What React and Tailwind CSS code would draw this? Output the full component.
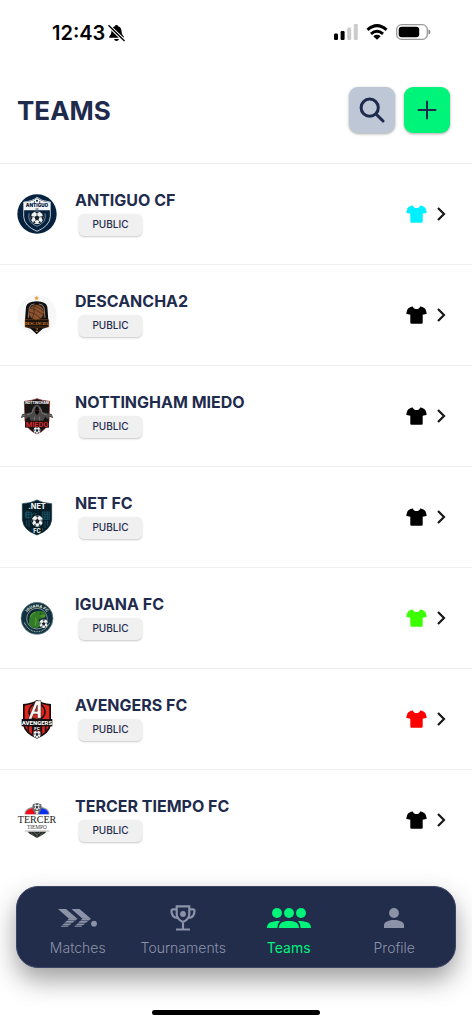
const NAVY = "#1f2b4d";

function Ball({ x, y, r }) {
  return (
    <g transform={`translate(${x} ${y}) scale(${r / 10})`}>
      <circle r="10" fill="#f1f3f2" />
      <path d="M0-4 4-1 2 4H-2L-4-1Z M-4-9 0-7 4-9 0-10Z M9-4 7 0 9 4 10 0Z M-9-4-7 0-9 4-10 0Z M4 6 7 7 4 9 2 8Z M-4 6-7 7-4 9-2 8Z" fill="#17202b" />
      <path d="M0-4V-8M4-1 8-2M2 4 5 7M-2 4-5 7M-4-1-8-2" stroke="#17202b" strokeWidth="1" />
    </g>
  );
}

function AntiguoCrest() {
  return (
    <svg viewBox="0 0 120 120" className="size-10">
      <circle cx="60" cy="60" r="59" fill="#07223f" />
      <path d="M20 24Q46 22 60 10 74 22 100 24V68Q98 96 60 112 22 96 20 68Z" fill="#07223f" stroke="#dfe6ec" strokeWidth="2.5" />
      <path d="M21 25Q46 24 60 12 74 24 99 25V49H21Z" fill="#f3f5f7" />
      <circle cx="60" cy="20" r="3" fill="#07223f" />
      <circle cx="52" cy="24" r="2" fill="#07223f" />
      <circle cx="68" cy="24" r="2" fill="#07223f" />
      <text x="60" y="40" textAnchor="middle" fontSize="14" fontWeight="900" fill="#07223f" fontFamily="Inter, sans-serif">ANTIGUO</text>
      <text x="60" y="48" textAnchor="middle" fontSize="7" fontWeight="700" fill="#07223f" fontFamily="Inter, sans-serif">CF</text>
      <path d="M36 58Q30 86 60 97 90 86 84 58" fill="none" stroke="#8a9bab" strokeWidth="2.5" />
      <Ball x={60} y={71} r={19} />
    </svg>
  );
}

function DescanchaCrest() {
  return (
    <svg viewBox="0 0 120 120" className="size-10">
      <circle cx="60" cy="60" r="59" fill="#f7f7f7" />
      <path d="M59 2 61 7 66 7 62 11 64 16 59 13 54 16 56 11 52 7 57 7Z" fill="#e99a2a" />
      <path d="M27 35Q31 20 59 19 87 20 91 35L94 75V96L77 101 59 118 41 101 24 96V75Z" fill="#111010" />
      <path d="M36 38Q38 28 59 27 80 28 82 38L85 70H33Z" fill="#2c1a10" />
      <path d="M34 68 37 38Q40 27 52 27M84 68 81 38Q78 27 66 27" fill="none" stroke="#b8b0a6" strokeWidth="2" />
      <circle cx="58" cy="52" r="22" fill="#8b5431" />
      <path d="M40 39Q57 42 78 59M36 51Q54 52 70 70M49 32Q69 38 79 49M45 69Q55 55 50 32" fill="none" stroke="#4b2917" strokeWidth="2.5" />
      <path d="M24 74H95V96H24Z" fill="#17110d" stroke="#9c5a1c" strokeWidth="1.5" />
      <text x="59" y="89" textAnchor="middle" fontSize="11" fontWeight="700" fill="#e08a30" fontFamily="Liberation Serif, serif">DESCANCHA</text>
      <text x="59" y="112" textAnchor="middle" fontSize="17" fontWeight="700" fill="#d2802b" fontFamily="Liberation Serif, serif">2</text>
    </svg>
  );
}

function NottinghamCrest() {
  return (
    <svg viewBox="0 0 120 120" className="size-10">
      <path d="M22 16Q45 14 60 8 75 14 98 16L96 74Q92 100 60 114 28 100 24 74Z" fill="#151515" stroke="#8b1c1e" strokeWidth="2" />
      <path d="M60 25Q75 31 76 49L104 54 109 67 98 62 93 70 84 62 78 76H42L36 62 27 70 22 62 11 67 16 54 44 49Q45 31 60 25Z" fill="#4a4848" />
      <path d="M60 31Q68 38 65 51L60 57 55 51Q52 38 60 31Z" fill="#050505" />
      <path d="M53 34Q46 45 44 52L30 57M67 34Q74 45 76 52L90 57M52 62V76M68 62V76M14 60 24 57M106 60 96 57" stroke="#8d8a8a" strokeWidth="2" fill="none" />
      <circle cx="57" cy="43" r="1.5" fill="#d61f1f" />
      <circle cx="63" cy="43" r="1.5" fill="#d61f1f" />
      <text x="60" y="24" textAnchor="middle" fontSize="10" fontWeight="800" fill="#efefef" fontFamily="Inter, sans-serif">NOTTINGHAM</text>
      <path d="M24 74H96V95H24Z" fill="#241011" />
      <text x="60" y="93" textAnchor="middle" fontSize="22" fontWeight="700" fill="#d72c2c" fontFamily="Roboto, sans-serif">MIEDO</text>
      <Ball x={60} y={103} r={10} />
    </svg>
  );
}

function NetCrest() {
  return (
    <svg viewBox="0 0 120 120" className="size-10">
      <path d="M16 20Q42 19 60 9 78 19 104 20V68Q101 100 60 114 19 100 16 68Z" fill="#071d28" stroke="#123846" strokeWidth="2" />
      <path d="M25 46H44V61H25ZM29 42V65M35 42V65M25 53H49M49 50H59M77 45H97V67H77ZM77 52H97M77 60H97M84 45V67M91 45V67M29 70V87M36 67V91M84 73V93M92 71V86M45 95V101M77 93V101" fill="none" stroke="#1f6478" strokeWidth="2" />
      <text x="60" y="36" textAnchor="middle" fontSize="22" fontWeight="800" fill="#e7f0ef" fontFamily="Inter, sans-serif">.NET</text>
      <Ball x={61} y={72} r={17} />
      <text x="60" y="108" textAnchor="middle" fontSize="17" fontWeight="800" fill="#e7f0ef" fontFamily="Inter, sans-serif">FC</text>
    </svg>
  );
}

function IguanaCrest() {
  return (
    <svg viewBox="0 0 120 120" className="size-10">
      <circle cx="60" cy="61" r="48" fill="#102f40" stroke="#6d8c8d" strokeWidth="2" />
      <circle cx="60" cy="62" r="31" fill="#0c2939" stroke="#bdc7b4" strokeWidth="2" />
      <path id="iguana-arc" d="M24 64A36 36 0 0 1 96 64" fill="none" />
      <text fontSize="12" fontWeight="800" fill="#dce1ce" fontFamily="Inter, sans-serif" textAnchor="middle">
        <textPath href="#iguana-arc" startOffset="50%">IGUANA FC</textPath>
      </text>
      <path d="M22 74Q36 101 60 101T98 74" fill="none" stroke="#8ba29b" strokeWidth="4" strokeDasharray="3 2" />
      <path d="M36 76Q34 42 62 39 82 38 88 52L82 61Q68 60 64 66L74 80 62 90Q46 90 36 80Z" fill="#327c28" />
      <path d="M40 56 46 47 56 42M56 60Q60 70 54 82M70 54H84" fill="none" stroke="#78ad3f" strokeWidth="2.5" />
      <circle cx="70" cy="48" r="2" fill="#10251b" />
      <Ball x={80} y={77} r={13} />
    </svg>
  );
}

function AvengersCrest() {
  return (
    <svg viewBox="0 0 120 120" className="size-10">
      <path d="M18 15Q46 12 60 3 74 12 102 15V78Q98 104 60 119 22 104 18 78Z" fill="#160c0e" />
      <path d="M23 20Q45 17 60 9 75 17 97 20V77Q92 100 60 113 28 100 23 77Z" fill="#e1251b" />
      <path d="M34 80V101M47 80V106M73 80V106M86 80V101" stroke="#171012" strokeWidth="5" />
      <circle cx="60" cy="38" r="24" fill="none" stroke="#171012" strokeWidth="5" />
      <path d="M34 60 56 5H72V58H61V45H50L44 60ZM53 37H61V18Z" fill="#f7f6f5" stroke="#171012" strokeWidth="1.5" fillRule="evenodd" />
      <path d="M14 60H106V82H14Z" fill="#130e10" />
      <text x="60" y="78" textAnchor="middle" fontSize="18" fontWeight="800" fill="#fff" fontFamily="Roboto, sans-serif">AVENGERS</text>
      <path d="M49 81H71V95H49Z" fill="#130e10" />
      <text x="60" y="93" textAnchor="middle" fontSize="12" fontWeight="800" fill="#fff" fontFamily="Inter, sans-serif">FC</text>
      <Ball x={60} y={106} r={11} />
    </svg>
  );
}

function TercerCrest() {
  return (
    <svg viewBox="0 0 120 120" className="size-10">
      <path d="M22 43Q23 27 42 22L60 10 78 22Q97 27 98 43Z" fill="#9b9d9c" />
      <path d="M25 43Q26 25 54 23V43Z" fill="#f00b18" />
      <path d="M66 23Q94 25 95 43H66Z" fill="#0930ef" />
      <path d="M47 13 60 9 73 13V28L66 43H54L47 28Z" fill="#6b6e6e" />
      <Ball x={60} y={21} r={9} />
      <path d="M55 33H65L62 43H58Z" fill="#e4e4e4" />
      <text x="60" y="70" textAnchor="middle" fontSize="30" fontWeight="500" fill="#161616" fontFamily="Liberation Serif, serif">TERCER</text>
      <text x="60" y="88" textAnchor="middle" fontSize="16" fill="#333" fontFamily="Liberation Serif, serif">TIEMPO</text>
      <path d="M23 93H97" stroke="#777" strokeWidth="1.5" />
      <path d="M32 95H88L82 101 60 114 38 101Z" fill="#252b27" />
      <path d="M50 96 60 104 70 96M60 104V113M42 98 52 107M78 98 68 107" fill="none" stroke="#9da19e" strokeWidth="1.5" />
    </svg>
  );
}

const teams = [
  { name: "ANTIGUO CF", crest: AntiguoCrest, color: "#00f0ff" },
  { name: "DESCANCHA2", crest: DescanchaCrest, color: "#000000" },
  { name: "NOTTINGHAM MIEDO", crest: NottinghamCrest, color: "#000000" },
  { name: "NET FC", crest: NetCrest, color: "#000000" },
  { name: "IGUANA FC", crest: IguanaCrest, color: "#3cff00" },
  { name: "AVENGERS FC", crest: AvengersCrest, color: "#ff0000" },
  { name: "TERCER TIEMPO FC", crest: TercerCrest, color: "#000000" },
];

function StatusBar() {
  return (
    <div className="flex h-16 items-center justify-between pl-[52px] pr-[41px]">
      <div className="flex items-center gap-[3px] pt-px text-black">
        <span className="text-[20px] font-semibold leading-6">12:43</span>
        <svg viewBox="0 0 17 18" className="h-[18px] w-[17px]">
          <path d="M8.500 1C7.500 1 7 1.600 6.900 2.300 4.300 3 3.500 5 3.400 7.500 3.300 10 2.700 11 1.400 12.200 1 12.600 1 13.800 1.900 13.800H15.100C16 13.800 16 12.600 15.600 12.200 14.300 11 13.700 10 13.600 7.500 13.500 5 12.700 3 10.100 2.300 10 1.600 9.500 1 8.500 1ZM6 15H11Q10.500 17 8.500 17T6 15Z" />
          <path d="M0 1 16.500 17" stroke="#fff" strokeWidth="3.4" />
          <path d="M.5 1.300 16.500 17" stroke="#000" strokeWidth="1.400" />
        </svg>
      </div>
      <div className="flex items-center gap-2">
        <svg viewBox="0 0 24 16" className="h-4 w-6">
          <rect x="0" y="9.500" width="4" height="6.500" rx="1.200" />
          <rect x="6.600" y="7" width="4" height="9" rx="1.200" />
          <rect x="13.200" y="3.500" width="4" height="12.500" rx="1.200" fill="#ccc" />
          <rect x="19.800" y="0" width="4" height="16" rx="1.200" fill="#ccc" />
        </svg>
        <svg viewBox="0 0 22 16" className="h-4 w-[22px]" fill="none" stroke="#000" strokeWidth="3">
          <path d="M1.500 5.800Q11-2.600 20.500 5.800M5 9.800Q11 4.800 17 9.800" />
          <path d="M11 15.800 7.300 12.200Q11 9.300 14.700 12.200Z" fill="#000" stroke="none" />
        </svg>
        <svg viewBox="0 0 35 16" className="h-4 w-[35px]">
          <rect x=".7" y=".7" width="30.600" height="14.600" rx="4.800" fill="none" stroke="#999" strokeWidth="1.300" />
          <rect x="2.700" y="2.700" width="20.500" height="10.600" rx="3" />
          <path d="M32.500 5.300Q34.500 6 34.500 8T32.500 10.700Z" fill="#888" />
        </svg>
      </div>
    </div>
  );
}

function Shirt({ color }) {
  return (
    <svg viewBox="0 0 21 18" className="h-[18px] w-[21px]" fill={color}>
      <path d="M6.800.4C7.500 2.300 8.800 3 10.500 3S13.500 2.300 14.200.4C16.500.6 18.500 1.600 19.600 3.500L20.700 7.300Q20.800 8 20.100 8.100L16.700 8.700V16.500Q16.700 17.700 15.500 17.700H5.500Q4.300 17.700 4.300 16.500V8.700L.9 8.100Q.2 8 .3 7.300L1.400 3.500C2.500 1.600 4.500.6 6.800.4Z" />
    </svg>
  );
}

function TeamRow({ team }) {
  const Crest = team.crest;
  return (
    <li className="border-t border-[#f0f0f2]">
      <a href="#team" className="flex h-[100px] items-center pl-[17px] pr-[25px]">
        <Crest />
        <div className="ml-[18px] flex flex-1 flex-col items-start gap-0.5 pb-1">
          <span className="text-[16px] font-bold leading-6 text-[#1f2b4d]">{team.name}</span>
          <span className="ml-1 flex h-[22px] w-[63px] items-center justify-center rounded-[5px] bg-[#f0f0f0] pb-px text-[10px] font-medium text-[#1f2b4d] shadow-[0_1px_2px_rgba(0,0,0,0.22)]">
            PUBLIC
          </span>
        </div>
        <Shirt color={team.color} />
        <svg viewBox="0 0 12 16" className="ml-2 h-4 w-3" fill="none" stroke="#18181b" strokeWidth="2.2">
          <path d="M3 2 9 8 3 14" />
        </svg>
      </a>
    </li>
  );
}

function MatchesIcon() {
  return (
    <svg viewBox="0 0 39 18" className="h-[18px] w-[39px]" fill="currentColor">
      <path d="M0 0H8L19.500 9.700H11ZM13.500 0H21.500L33 9.700H24.500Z" />
      <path d="M11 9.500H19.500L17.500 11.400H9ZM8.500 12H16.500L14.600 13.800H6.500ZM6 14.400H13.500L12 15.900H4.500ZM4 16.500H11L9.700 17.800H2.700ZM24.500 9.500H33L31 11.400H22.500ZM22 12H30L28.100 13.800H20ZM19.500 14.400H27L25.500 15.900H18ZM17.500 16.500H24.500L23.200 17.800H16.200Z" />
      <circle cx="36" cy="14.700" r="2.900" />
    </svg>
  );
}

function TrophyIcon() {
  return (
    <svg viewBox="0 0 26 26" className="size-[26px]" fill="none" stroke="currentColor" strokeWidth="2.200">
      <path d="M6.700 1.300H19.300V9C19.300 13 16.500 15.500 13 17 9.500 15.500 6.700 13 6.700 9ZM6 4.300H3.200Q1.500 4.300 1.500 6C1.500 10 3.500 12.800 8 13M20 4.300H22.800Q24.500 4.300 24.500 6C24.500 10 22.500 12.800 18 13M13 17V24M6 24.500H20" />
      <circle cx="13" cy="9" r="2.900" fill="currentColor" stroke="none" />
    </svg>
  );
}

function TeamsIcon() {
  return (
    <svg viewBox="0 0 44 20" className="h-5 w-11" fill="currentColor">
      <circle cx="10" cy="5" r="5" />
      <circle cx="22" cy="5" r="5" />
      <circle cx="34" cy="5" r="5" />
      <path d="M12 20C12 15.500 15 13 22 13S32 15.500 32 20ZM0 20C0 15 4 13 13 13.100Q10.500 15.500 10.300 20ZM44 20C44 15 40 13 31 13.100Q33.500 15.500 33.700 20Z" />
    </svg>
  );
}

function ProfileIcon() {
  return (
    <svg viewBox="0 0 20 20" className="size-5" fill="currentColor">
      <circle cx="10" cy="5" r="4.900" />
      <path d="M0 20V17C0 13.700 5.500 12 10 12S20 13.700 20 17V20Z" />
    </svg>
  );
}

const tabs = [
  { label: "Matches", icon: MatchesIcon },
  { label: "Tournaments", icon: TrophyIcon },
  { label: "Teams", icon: TeamsIcon, active: true },
  { label: "Profile", icon: ProfileIcon },
];

function App() {
  return (
    <div className="flex min-h-screen flex-col bg-white font-['Inter',sans-serif]">
      <StatusBar />
      <header className="flex items-center justify-between pb-[30px] pl-[17px] pr-[22px] pt-[23px]">
        <h1 className="pt-0.5 text-[26px] font-bold leading-8 text-[#1f2b4d]">TEAMS</h1>
        <div className="flex gap-[9px]">
          <button aria-label="Search" className="flex size-[46px] items-center justify-center rounded-[9px] bg-[#bec7d6] shadow-[0_1px_3px_rgba(0,0,0,0.35)]">
            <svg viewBox="0 0 26 26" className="size-[26px]" fill="none" stroke={NAVY} strokeWidth="3" strokeLinecap="round">
              <circle cx="10.700" cy="10.700" r="8.600" />
              <path d="M17 17 24 24" />
            </svg>
          </button>
          <button aria-label="Add team" className="flex size-[46px] items-center justify-center rounded-[9px] bg-[#00f47a] shadow-[0_1px_3px_rgba(0,0,0,0.35)]">
            <svg viewBox="0 0 20 20" className="size-5" fill="none" stroke={NAVY} strokeWidth="2" strokeLinecap="round">
              <path d="M10 1.500V18.500M1.500 10H18.500" />
            </svg>
          </button>
        </div>
      </header>

      <ul>
        {teams.map(team => (
          <TeamRow key={team.name} team={team} />
        ))}
      </ul>

      <nav className="mx-4 mt-4 grid h-[82px] grid-cols-4 rounded-[22px] border border-[#3d4666] bg-[#222c4b] px-2 shadow-[0_12px_26px_rgba(0,0,0,0.38)]">
        {tabs.map(({ label, icon: Icon, active }) => (
          <a
            key={label}
            href="#tab"
            className={`flex flex-col items-center justify-center gap-[7px] pt-2 text-[14px] leading-5 ${active ? "text-[#00f47a]" : "font-light text-[#8c93a8]"}`}
          >
            <span className="flex h-[26px] items-center">
              <Icon />
            </span>
            {label}
          </a>
        ))}
      </nav>

      <div className="mx-auto mb-[9px] mt-auto h-[5px] w-[168px] rounded-full bg-black" />
    </div>
  );
}

export default App;
